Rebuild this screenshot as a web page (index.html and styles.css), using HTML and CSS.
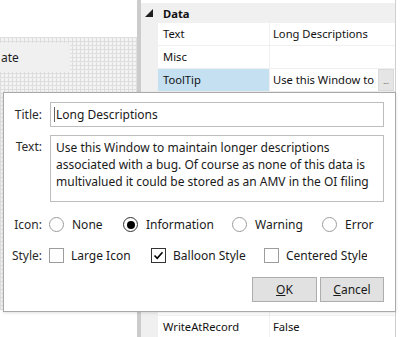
FILE: index.html
```html
<!DOCTYPE html>
<html lang="en">
<head>
  <meta charset="UTF-8" />
  <title>ToolTip Editor</title>
  <link rel="stylesheet" href="styles.css">
</head>
<body>

  <div class="app">
    <div class="designer">
      <div class="designer-top"></div>
      <div class="canvas">
        <div class="form-btn">ate</div>
      </div>
    </div>
    <div class="splitter"></div>

    <div class="props">
      <div class="cat-row">
        <svg class="cat-arrow" width="8" height="8" viewBox="0 0 8 8"><polygon points="8,0 8,8 0,8" fill="#1e1e1e"/></svg>
        <span>Data</span>
      </div>
      <div class="prop-row">
        <div class="gutter"></div>
        <div class="prop-name">Text</div>
        <div class="prop-value">Long Descriptions</div>
      </div>
      <div class="prop-row">
        <div class="gutter"></div>
        <div class="prop-name">Misc</div>
        <div class="prop-value"></div>
      </div>
      <div class="prop-row selected">
        <div class="gutter"></div>
        <div class="prop-name">ToolTip</div>
        <div class="prop-value">
          <span class="value-text">Use this Window to</span>
          <span class="dots-btn">...</span>
        </div>
      </div>
      <div class="prop-row filler">
        <div class="gutter"></div>
        <div class="prop-name"></div>
        <div class="prop-value"></div>
      </div>
      <div class="prop-row">
        <div class="gutter"></div>
        <div class="prop-name">WriteAtRecord</div>
        <div class="prop-value">False</div>
      </div>
    </div>
    <div class="edge"></div>
  </div>

  <div class="dialog">
    <div class="field-row">
      <label class="field-label">Title:</label>
      <div class="text-input"><span class="caret"></span>Long Descriptions</div>
    </div>

    <div class="field-row memo-row">
      <label class="field-label">Text:</label>
      <div class="memo">
        <div>Use this Window to maintain longer descriptions</div>
        <div>associated with a bug. Of course as none of this data is</div>
        <div>multivalued it could be stored as an AMV in the OI filing</div>
      </div>
    </div>

    <div class="field-row option-row">
      <label class="field-label">Icon:</label>
      <div class="options icons">
        <div class="option"><span class="radio"></span>None</div>
        <div class="option"><span class="radio checked"></span>Information</div>
        <div class="option"><span class="radio"></span>Warning</div>
        <div class="option"><span class="radio"></span>Error</div>
      </div>
    </div>

    <div class="field-row option-row style-row">
      <label class="field-label">Style:</label>
      <div class="options styles">
        <div class="option"><span class="check"></span>Large Icon</div>
        <div class="option balloon">
          <span class="check checked">
            <svg width="13" height="13" viewBox="0 0 13 13"><path d="M2.5 6.5 L5.2 9.3 L10.5 3.2" fill="none" stroke="#000" stroke-width="1.6"/></svg>
          </span>Balloon Style
        </div>
        <div class="option centered"><span class="check"></span>Centered Style</div>
      </div>
    </div>

    <div class="buttons">
      <button class="btn ok"><u>O</u>K</button>
      <button class="btn cancel"><u>C</u>ancel</button>
    </div>
  </div>

</body>
</html>
```

FILE: styles.css
```css
* {
  margin: 0;
  padding: 0;
  box-sizing: border-box;
}

body {
  width: 400px;
  height: 337px;
  overflow: hidden;
  position: relative;
  font-family: 'Noto Sans', 'Open Sans', sans-serif;
  font-size: 11.2px;
  color: #111;
  background: #fff;
}

.app {
  display: flex;
  height: 337px;
}

/* form designer on the left */
.designer {
  width: 137px;
  flex-shrink: 0;
  display: flex;
  flex-direction: column;
}

.designer-top {
  height: 37px;
  background: #fff;
}

.canvas {
  height: 273px;
  padding-top: 6px;
  background-color: #f3f3f3;
  background-image:
    linear-gradient(#dedede 1px, transparent 1px),
    linear-gradient(90deg, #dedede 1px, transparent 1px);
  background-size: 4px 4px;
}

.form-btn {
  width: 70px;
  height: 29px;
  display: flex;
  align-items: center;
  padding-left: 1px;
  background: #f0f0f0;
  font-size: 12px;
  color: #1e1e1e;
}

.splitter {
  width: 4px;
  flex-shrink: 0;
  background: #cccccc;
}

/* property grid */
.props {
  width: 255px;
  min-width: 0;
  flex-shrink: 0;
  padding-top: 3px;
  border-right: 1px solid #cfcfcf;
}

.edge {
  width: 4px;
  flex-shrink: 0;
}

.cat-row {
  height: 20px;
  display: flex;
  align-items: center;
  background: #f0f0f0;
  font-weight: 700;
}

.cat-arrow {
  margin-left: 4px;
  margin-right: 10px;
}

.prop-row {
  display: grid;
  grid-template-columns: 17px 112px minmax(0, 1fr);
  height: 23px;
  border-bottom: 1px solid #f0f0f0;
  line-height: 22px;
}

.prop-row .gutter {
  background: #f0f0f0;
}

.prop-name {
  padding-left: 5px;
  border-right: 1px solid #f0f0f0;
  white-space: nowrap;
  overflow: hidden;
}

.prop-value {
  display: flex;
  min-width: 0;
  padding-left: 3px;
  white-space: nowrap;
  overflow: hidden;
}

.selected .prop-name {
  background: #c5e0f1;
}

.value-text {
  flex: 1;
  min-width: 0;
  overflow: hidden;
}

.dots-btn {
  width: 16px;
  flex-shrink: 0;
  margin: 0 1px 0 3px;
  background: #e5e5e5;
  border: 1px solid #dadada;
  font-size: 7px;
  line-height: 24px;
  text-align: center;
  color: #555;
}

.prop-row.filler {
  height: 224px;
}

/* tooltip dialog */
.dialog {
  position: absolute;
  left: 3px;
  top: 92px;
  width: 393px;
  height: 220px;
  padding: 9px 11px 0 0;
  background: #fff;
  border: 1px solid #a9a9a9;
  box-shadow: 0 1px 3px rgba(0, 0, 0, 0.12);
  font-size: 12px;
  color: #1a1a1a;
}

.field-row {
  display: flex;
  align-items: center;
}

.field-label {
  width: 38px;
  margin-right: 8px;
  flex-shrink: 0;
  text-align: right;
  color: #2a2a2a;
}

.text-input {
  flex: 1;
  height: 25px;
  display: flex;
  align-items: center;
  padding-left: 3px;
  border: 1px solid #bdbdbd;
}

.caret {
  width: 1px;
  height: 15px;
  margin-right: 1px;
  background: #666;
}

.memo-row {
  align-items: flex-start;
  margin-top: 8px;
}

.memo-row .field-label {
  margin-top: 3px;
  line-height: 17px;
}

.memo {
  flex: 1;
  height: 67px;
  padding: 3px 0 0 5px;
  border: 1px solid #bdbdbd;
  line-height: 17px;
  white-space: nowrap;
  overflow: hidden;
}

.option-row {
  height: 15px;
  margin-top: 15px;
}

.style-row {
  margin-top: 16px;
}

.options {
  display: flex;
  margin-left: -1px;
}

.option {
  display: flex;
  align-items: center;
  gap: 8px;
  white-space: nowrap;
  overflow: hidden;
}

.icons .option:nth-child(1) { width: 74px; }
.icons .option:nth-child(2) { width: 109px; }
.icons .option:nth-child(3) { width: 90px; }

.styles .option { gap: 7px; }
.styles .option:nth-child(1) { width: 102px; }
.styles .option.balloon { width: 95px; margin-right: 18px; }
.styles .option.centered { width: 103px; }

.radio {
  width: 15px;
  height: 15px;
  flex-shrink: 0;
  display: flex;
  align-items: center;
  justify-content: center;
  border: 1px solid #9c9c9c;
  border-radius: 50%;
  background: #fff;
}

.radio.checked {
  border-color: #333;
}

.radio.checked::after {
  content: "";
  width: 8px;
  height: 8px;
  border-radius: 50%;
  background: #000;
}

.check {
  width: 15px;
  height: 15px;
  flex-shrink: 0;
  display: flex;
  align-items: center;
  justify-content: center;
  border: 1px solid #9c9c9c;
  background: #fff;
}

.check.checked {
  border-color: #333;
}

.buttons {
  display: flex;
  justify-content: flex-end;
  gap: 3px;
  margin-top: 14px;
}

.btn {
  height: 25px;
  background: #e1e1e1;
  border: 1px solid #adadad;
  font-family: inherit;
  font-size: 12px;
  color: #1a1a1a;
}

.btn.ok { width: 65px; }
.btn.cancel { width: 64px; }
```
